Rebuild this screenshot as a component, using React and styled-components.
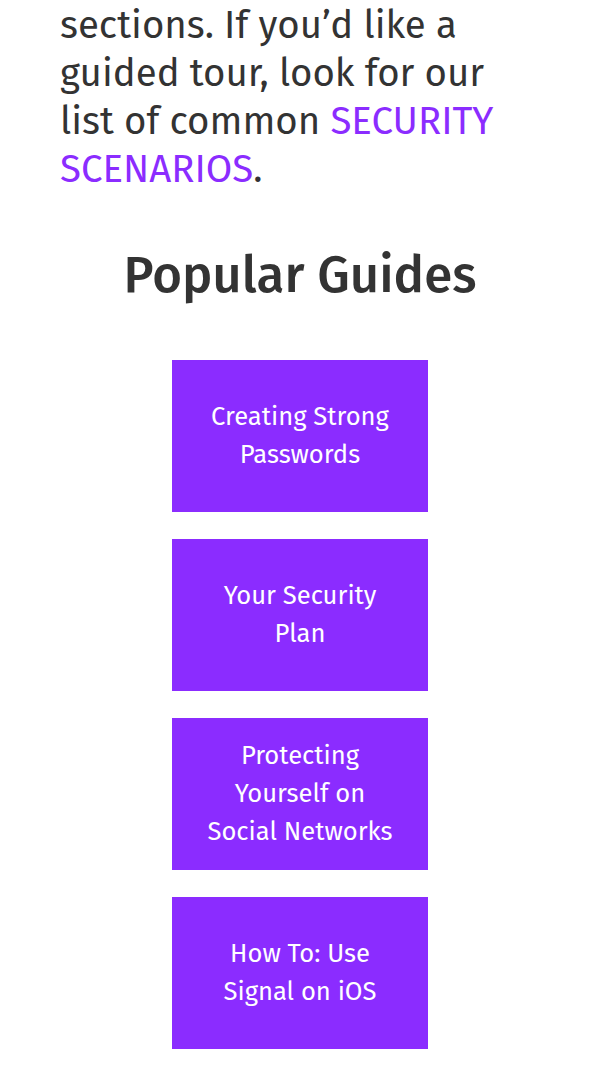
import React from 'react';
import styled, { createGlobalStyle } from 'styled-components';

const GlobalStyle = createGlobalStyle`
  html, body { margin: 0; padding: 0; background: #fff; }
  body { font-family: "Fira Sans", "Open Sans", "Noto Sans", sans-serif; color: #333; }
`;

const Page = styled.div`
  display: flex;
  flex-direction: column;
  align-items: center;
  padding: 0 60px;
`;

const Intro = styled.p`
  align-self: stretch;
  margin: 1px 0 0;
  font-size: 38.4px;
  line-height: 48px;
  color: #333;
`;

const Link = styled.a`
  color: #8b2cff;
  text-decoration: none;
`;

const Heading = styled.h2`
  margin: 50px 0 0;
  font-size: 51px;
  line-height: 64px;
  font-weight: 500;
  color: #333;
`;

const GuideList = styled.div`
  display: flex;
  flex-direction: column;
  gap: 27px;
  margin-top: 53px;
`;

const GuideCard = styled.a`
  display: flex;
  align-items: center;
  justify-content: center;
  box-sizing: border-box;
  width: 256px;
  height: 152px;
  padding: 0 30px;
  background: #8b2cff;
  color: #fff;
  font-size: 25.6px;
  line-height: 38px;
  text-align: center;
  text-decoration: none;
`;

const guides = [
  'Creating Strong Passwords',
  'Your Security Plan',
  'Protecting Yourself on Social Networks',
  'How To: Use Signal on iOS',
];

export default function App() {
  return (
    <>
      <GlobalStyle />
      <Page>
        <Intro>
          sections. If you’d like a guided tour, look for our list of common{' '}
          <Link href="#">SECURITY SCENARIOS</Link>.
        </Intro>
        <Heading>Popular Guides</Heading>
        <GuideList>
          {guides.map((g) => (
            <GuideCard key={g} href="#">{g}</GuideCard>
          ))}
        </GuideList>
      </Page>
    </>
  );
}
